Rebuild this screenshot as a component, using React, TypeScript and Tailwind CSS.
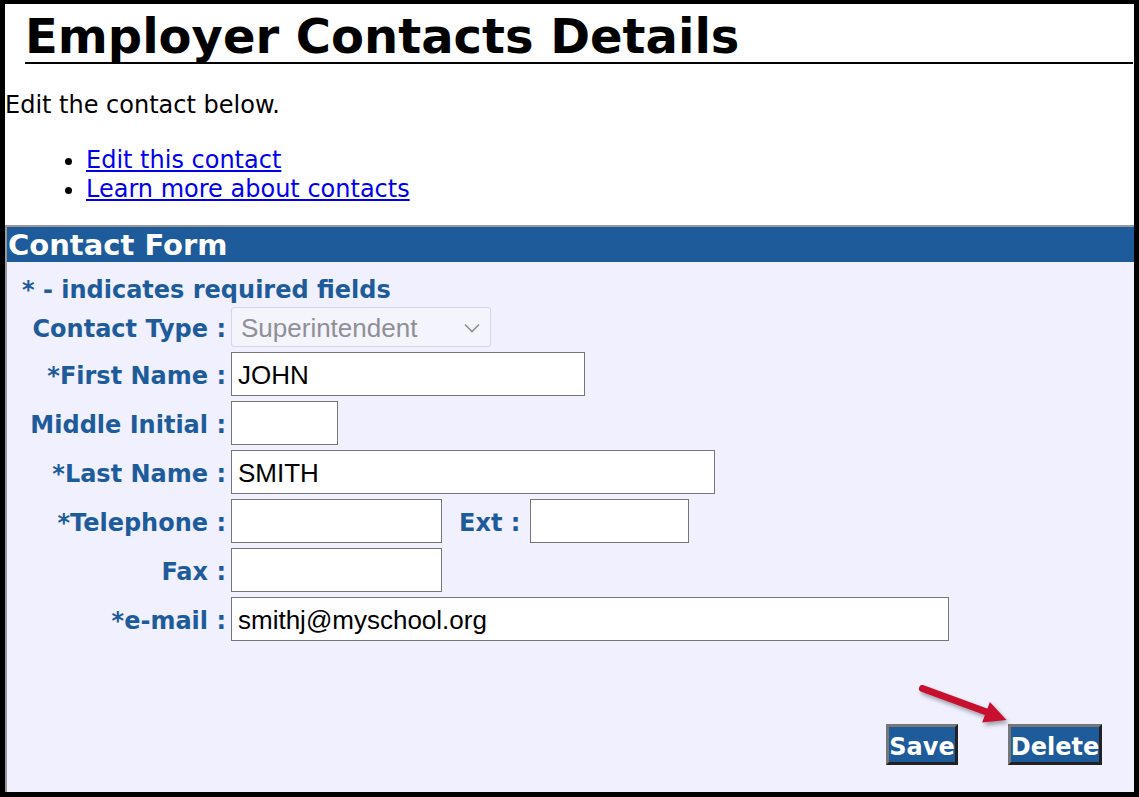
import React from "react";

const blue = "text-[#1e5b9a]";

type Row = { label: string; width: string; value?: string };

const rows: Row[] = [
  { label: "*First Name :", width: "w-[354px]", value: "JOHN" },
  { label: "Middle Initial :", width: "w-[107px]" },
  { label: "*Last Name :", width: "w-[484px]", value: "SMITH" },
];

function TextBox({ width, value }: { width: string; value?: string }) {
  return (
    <div
      className={`${width} flex h-[44px] items-center border border-[#767676] bg-white px-[6px] pt-[2px] text-[26px] text-black [font-family:'Liberation_Sans',Arial,sans-serif]`}
    >
      {value}
    </div>
  );
}

function Label({ children }: { children: React.ReactNode }) {
  return (
    <div className={`flex items-center justify-end pt-[4px] text-[24px] font-bold ${blue}`}>{children}</div>
  );
}

export default function App() {
  return (
    <div className="relative flex h-[797px] w-[1139px] flex-col border-t-[4px] border-r-[5px] border-b-[5px] border-l-[5px] border-black bg-white [font-family:'DejaVu_Sans',Verdana,sans-serif]">
      <h1 className="mt-[6px] ml-[20px] mr-[1px] border-b-2 border-black text-[48px] font-bold leading-[52px] text-black">
        Employer Contacts Details
      </h1>
      <p className="mt-[27px] text-[24px] leading-[29px] text-black">Edit the contact below.</p>
      <ul className="mt-[26px] list-disc pl-[81px] text-[24px] leading-[29px]">
        <li>
          <a href="#" className="text-[#0000ee] underline">
            Edit this contact
          </a>
        </li>
        <li>
          <a href="#" className="text-[#0000ee] underline">
            Learn more about contacts
          </a>
        </li>
      </ul>

      <section className="mt-[21px] flex flex-1 flex-col border-t-2 border-l-2 border-[#999999] bg-[#f0f0ff]">
        <div className="h-[35px] bg-[#1e5b9a] pl-[1px] pt-[1px] text-[29px] font-bold leading-[34px] text-white">
          Contact Form
        </div>
        <div className={`mt-[14px] pl-[15px] text-[24px] font-bold leading-[29px] ${blue}`}>
          * - indicates required fields
        </div>

        <div className="mt-[2px] grid grid-cols-[219px_1fr] gap-x-[5px] gap-y-[5px]">
          <Label>Contact Type :</Label>
          <div className="flex h-[40px] w-[260px] items-center justify-between rounded-[3px] border border-[#d6d6e0] bg-[#f4f4fc] pl-[9px] pr-[10px] pt-[2px] text-[26px] text-[#8f8f96] [font-family:'Liberation_Sans',Arial,sans-serif]">
            <span>Superintendent</span>
            <svg width="16" height="10" viewBox="0 0 16 10" fill="none">
              <path d="M1 1.5 L8 8.5 L15 1.5" stroke="#8f8f96" strokeWidth="1.6" />
            </svg>
          </div>

          {rows.map((r) => (
            <React.Fragment key={r.label}>
              <Label>{r.label}</Label>
              <TextBox width={r.width} value={r.value} />
            </React.Fragment>
          ))}

          <Label>*Telephone :</Label>
          <div className="flex items-center">
            <TextBox width="w-[211px]" />
            <span className={`ml-[17px] mr-[10px] pt-[4px] text-[24px] font-bold ${blue}`}>Ext :</span>
            <TextBox width="w-[159px]" />
          </div>

          <Label>Fax :</Label>
          <TextBox width="w-[211px]" />

          <Label>*e-mail :</Label>
          <TextBox width="w-[718px]" value="smithj@myschool.org" />
        </div>

        <div className="mt-auto mb-[27px] mr-[32px] flex justify-end gap-[50px]">
          <button className="flex h-[41px] w-[72px] items-center justify-center border-[3px] border-t-[#777777] border-l-[#777777] border-r-[#222222] border-b-[#222222] bg-[#1e5b9a] pt-[4px] text-[24px] font-bold text-white">
            Save
          </button>
          <button className="flex h-[41px] w-[94px] items-center justify-center border-[3px] border-t-[#777777] border-l-[#777777] border-r-[#222222] border-b-[#222222] bg-[#1e5b9a] pt-[4px] text-[24px] font-bold text-white">
            Delete
          </button>
        </div>
      </section>

      {/* annotation arrow pointing at Delete */}
      <svg
        className="absolute left-[893px] top-[663px] drop-shadow-[2px_3px_2px_rgba(0,0,0,0.35)]"
        width="120"
        height="70"
        viewBox="0 0 120 70"
      >
        <line x1="24.5" y1="21.5" x2="90" y2="45.5" stroke="#c8102e" strokeWidth="7" strokeLinecap="round" />
        <polygon points="108.5,53 84.1,55.6 91.9,35" fill="#c8102e" />
      </svg>
    </div>
  );
}
